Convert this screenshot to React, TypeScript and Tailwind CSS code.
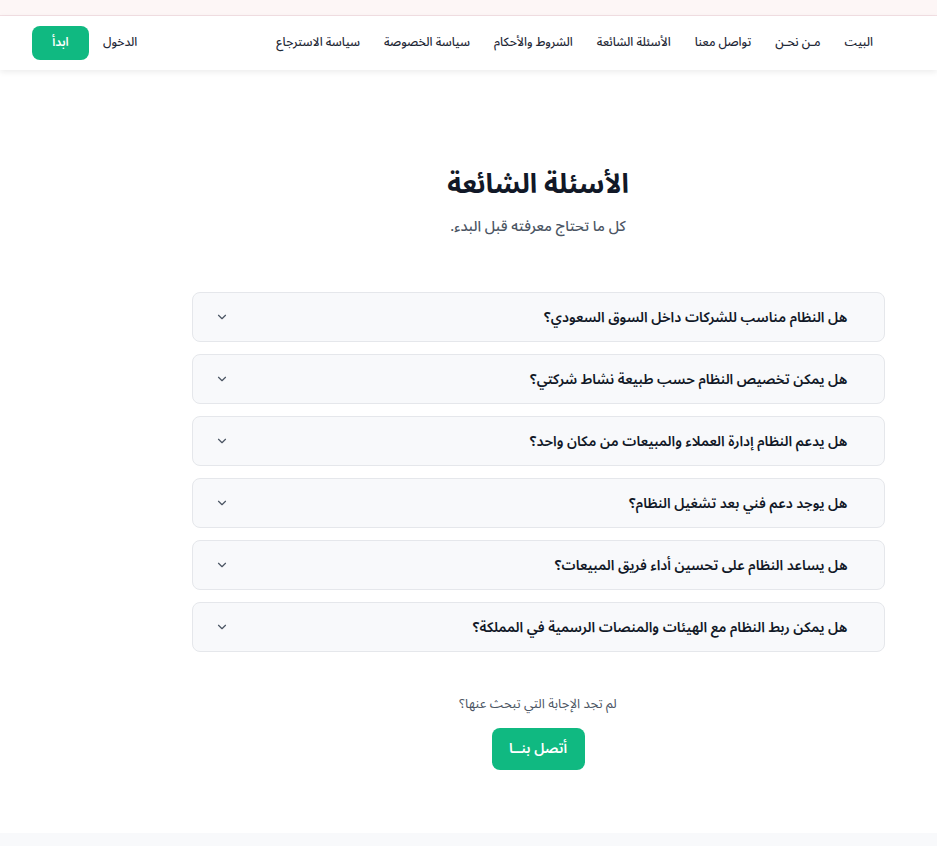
import React from "react";

const questions = [
  "هل النظام مناسب للشركات داخل السوق السعودي؟",
  "هل يمكن تخصيص النظام حسب طبيعة نشاط شركتي؟",
  "هل يدعم النظام إدارة العملاء والمبيعات من مكان واحد؟",
  "هل يوجد دعم فني بعد تشغيل النظام؟",
  "هل يساعد النظام على تحسين أداء فريق المبيعات؟",
  "هل يمكن ربط النظام مع الهيئات والمنصات الرسمية في المملكة؟",
];

const navItems = [
  "البيت",
  "مـن نحـن",
  "تواصل معنا",
  "الأسئلة الشائعة",
  "الشروط والأحكام",
  "سياسة الخصوصة",
  "سياسة الاسترجاع",
];

function Chevron() {
  return (
    <svg width="14" height="14" viewBox="0 0 24 24" fill="none" stroke="#4b5563" strokeWidth="2" strokeLinecap="round" strokeLinejoin="round">
      <path d="m6 9 6 6 6-6" />
    </svg>
  );
}

export default function App() {
  return (
    <div dir="rtl" className="min-h-[846px] bg-white text-[#111827]" style={{ fontFamily: '"Noto Sans Arabic", "Noto Sans", "DejaVu Sans", sans-serif' }}>
      <div className="h-4 bg-[#fdf6f6] border-b border-[#f3e0e4]" />
      <header className="h-[54px] bg-white shadow-[0_2px_6px_rgba(0,0,0,0.08)] flex items-center justify-between pr-16 pl-8 relative z-10">
        <nav className="flex items-center gap-[24px] text-[12px] font-medium text-[#1f2937]">
          {navItems.map((n) => (
            <span key={n}>{n}</span>
          ))}
        </nav>
        <div className="flex items-center gap-[14px]">
          <span className="text-[12px] font-medium text-[#1f2937]">الدخول</span>
          <span className="w-[57px] h-[34px] rounded-lg bg-[#10b981] text-white text-[12px] font-semibold flex items-center justify-center">ابدأ</span>
        </div>
      </header>
      <main className="pt-[95px] pb-[63px] flex flex-col items-center">
        <div className="w-[693px] ml-[139px] flex flex-col items-center">
          <h1 className="text-[27px] font-bold text-[#111827] leading-[40px]">الأسئلة الشائعة</h1>
          <p className="mt-[11px] text-[14.5px] font-medium text-[#4b5563] leading-[22px]">كل ما تحتاج معرفته قبل البدء.</p>
          <div className="mt-[54px] w-full flex flex-col gap-3">
            {questions.map((q) => (
              <div key={q} className="h-[50px] rounded-lg border border-[#e5e7eb] bg-[#f8f9fb] flex items-center justify-between pr-9 pl-[22px]">
                <span className="text-[14px] font-semibold text-[#111827]">{q}</span>
                <Chevron />
              </div>
            ))}
          </div>
          <p className="mt-[43px] text-[13px] text-[#4b5563]">لم تجد الإجابة التي تبحث عنها؟</p>
          <button className="mt-[13px] w-[93px] h-[42px] rounded-lg bg-[#10b981] text-white text-[14px] font-semibold">أتصل بنــا</button>
        </div>
      </main>
      <footer className="h-[14px] bg-[#f8f9fb]" />
    </div>
  );
}
